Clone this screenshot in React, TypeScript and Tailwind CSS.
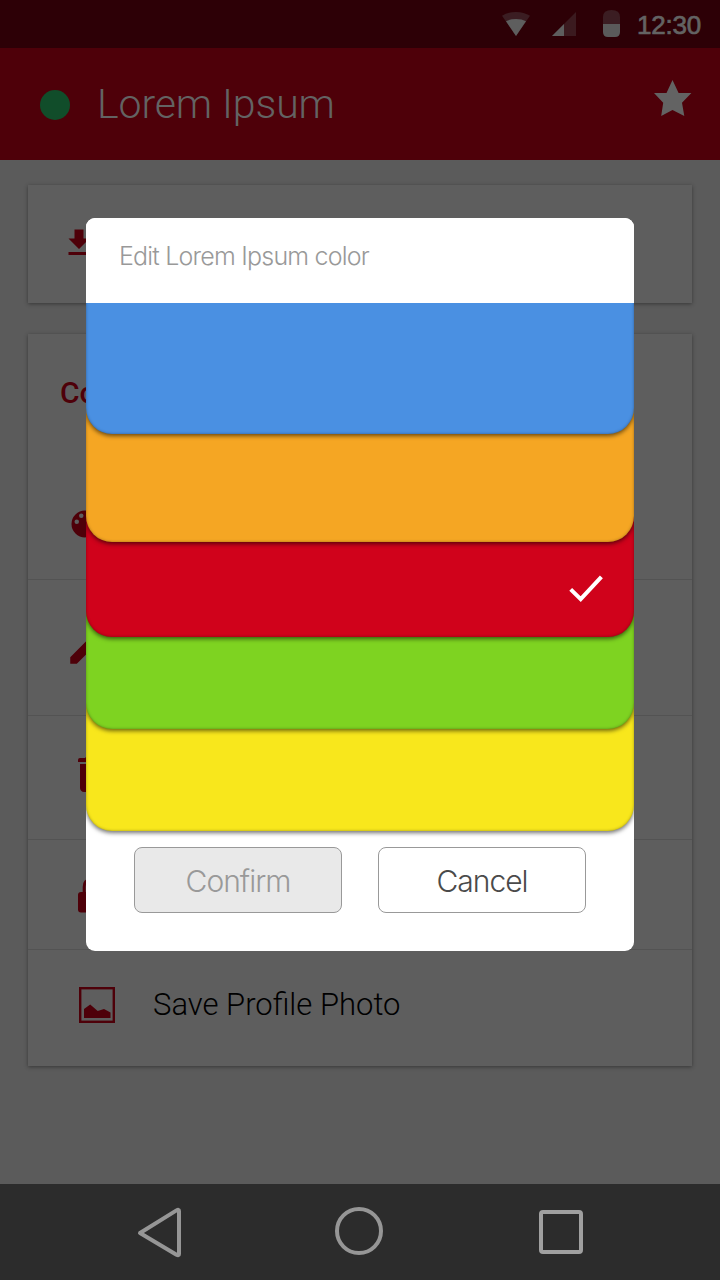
import React from "react";

const ICON = "#4e0009";

function StatusBar() {
  return (
    <div className="flex h-12 items-start bg-[#2d0006]">
      <svg className="ml-[500px] h-12 w-[128px] shrink-0" viewBox="500 0 128 48">
        <path d="M516 36 502 15.8Q508 12 516 12T530 15.8Z" fill="#3b1d22" />
        <path d="M516 36 506 21.3Q510 19 516 19T526 21.3Z" fill="#5e5e5e" />
        <path d="M552 36 576 12V36Z" fill="#3b1a1f" />
        <path d="M552 36 564 24V36Z" fill="#5e5e5e" />
        <path d="M603 24V17Q603 10 611.5 10T620 17V24Z" fill="#3b1d22" />
        <path d="M603 24H620V32Q620 37 615 37H608Q603 37 603 32Z" fill="#5a5a5a" />
      </svg>
      <span className="ml-[9px] mt-[7px] whitespace-nowrap font-['Liberation_Sans',sans-serif] text-[26px] leading-9 tracking-[-0.2px] text-[#636363] [-webkit-text-stroke:0.7px_#636363]">
        12:30
      </span>
    </div>
  );
}

function AppBar() {
  return (
    <header className="flex h-28 items-center bg-[#4e0009] pl-10 pr-[27px]">
      <span className="mt-[2px] size-[30px] rounded-full bg-[#114d2a]" />
      <h1 className="ml-[27px] font-[Roboto,sans-serif] text-[41px] font-light leading-none tracking-[-0.1px] text-[#636363]">
        Lorem Ipsum
      </h1>
      <svg className="-mt-3 ml-auto h-[38px] w-10" viewBox="653 79 40 38">
        <path
          d="M672.5 80 678.6 93.1H691.4L682 102.7 684.3 116 672.5 109.9 661.2 116 663.2 102.7 654 93.1H666.5Z"
          fill="#636363"
        />
      </svg>
    </header>
  );
}

function ActionCards() {
  const card = "bg-[#5e5e5e] shadow-[0_1px_4px_rgba(0,0,0,0.4)]";
  return (
    <main className="flex-1 px-7 pt-[25px]">
      <section className={`h-[118px] pl-[32.5px] pt-[39.5px] ${card}`}>
        <svg className="size-9" viewBox="0 0 24 24" fill={ICON}>
          <path d="M19 9h-4V3H9v6H5l7 7 7-7zM5 18v2h14v-2H5z" />
        </svg>
      </section>
      <section className={`mt-[31px] h-[732px] ${card}`}>
        <div className="h-[246px] border-b border-[#535353] pt-[42px]">
          <h2 className="pl-[32px] font-[Roboto,sans-serif] text-[30px] font-medium leading-[34px] text-[#4e0009]">
            Co
          </h2>
          <svg className="ml-[39px] mt-24 size-9" viewBox="0 0 24 24" fill={ICON}>
            <path d="M12 3a9 9 0 0 0 0 18c.83 0 1.5-.67 1.5-1.5 0-.39-.15-.74-.39-1.01-.23-.26-.38-.61-.38-.99 0-.83.67-1.5 1.5-1.5H16c2.76 0 5-2.24 5-5 0-4.42-4.03-8-9-8zm-5.5 9a1.5 1.5 0 1 1 0-3 1.5 1.5 0 0 1 0 3zm3-4a1.5 1.5 0 1 1 0-3 1.5 1.5 0 0 1 0 3z" />
          </svg>
        </div>
        <div className="h-[136px] border-b border-[#535353] pl-[36.75px] pt-[47px]">
          <svg className="size-[42px]" viewBox="0 0 24 24" fill={ICON}>
            <path d="M3 17.25V21h3.75L17.81 9.94l-3.75-3.75L3 17.25zM20.71 7.04a1 1 0 0 0 0-1.41l-2.34-2.34a1 1 0 0 0-1.41 0l-1.83 1.83 3.75 3.75 1.83-1.83z" />
          </svg>
        </div>
        <div className="h-[124px] border-b border-[#535353] pl-10 pt-[34px]">
          <svg className="size-12" viewBox="0 0 24 24" fill={ICON}>
            <path d="M6 19c0 1.1.9 2 2 2h8c1.1 0 2-.9 2-2V7H6v12zM19 4h-3.5l-1-1h-5l-1 1H6q-1 0-1 1v1h14z" />
          </svg>
        </div>
        <div className="h-[110px] border-b border-[#535353] pl-[50px] pt-[36px]">
          <svg className="h-[37px] w-6" viewBox="0 0 24 37">
            <rect y="16" width="24" height="20.6" rx="3" fill={ICON} />
            <path d="M6.2 17V11Q6.2 4 12 4T17.8 11V17" fill="none" stroke={ICON} strokeWidth="3" />
          </svg>
        </div>
        <div className="flex h-[116px] items-start pl-[51px] pt-[37px]">
          <svg className="size-9" viewBox="0 0 36 36">
            <rect x="1.2" y="1.2" width="33.6" height="33.6" fill="none" stroke={ICON} strokeWidth="2.4" />
            <path d="M5 22 11.2 17.5 18.7 24 25 22 31.5 25.5V31H5Z" fill={ICON} />
          </svg>
          <span className="ml-[38px] whitespace-nowrap font-[Roboto,sans-serif] text-[31px] font-light leading-9 text-black">
            Save Profile Photo
          </span>
        </div>
      </section>
    </main>
  );
}

function NavBar() {
  return (
    <nav className="flex h-24 items-start bg-[#2c2c2c] pt-[22px]">
      <svg className="ml-[136px] h-[52px] w-[48px]" viewBox="136 1206 48 52">
        <path d="M140 1233 176.5 1210.4Q179 1209 179 1211V1254Q179 1256 176.5 1254.8Z" fill="none" stroke="#969696" strokeWidth="4" strokeLinejoin="round" />
      </svg>
      <span className="ml-[151px] mt-px size-12 rounded-full border-4 border-[#969696]" />
      <span className="ml-[156px] mt-1 size-11 rounded-[4px] border-4 border-[#a0a0a0]" />
    </nav>
  );
}

const strip =
  "relative -mt-[26px] rounded-b-[26px] shadow-[0_2px_4px_rgba(0,0,0,0.55),inset_0_0_3px_rgba(0,0,0,0.35)]";

function ColorDialog() {
  const button =
    "flex h-[66px] w-[208px] items-center justify-center rounded-[8px] border border-[#999999] pt-[3px] font-[Inter,sans-serif] text-[30px] font-light";
  return (
    <div
      role="dialog"
      className="absolute left-[86px] top-[218px] flex h-[732.5px] w-[548px] flex-col overflow-hidden rounded-[9px] bg-white"
    >
      <div className="relative z-10 h-[85px] shrink-0 bg-white pl-[33px] pt-[21px] font-[Inter,sans-serif] text-[25px] font-light leading-[34px] tracking-[-0.8px] text-[#999999]">
        Edit Lorem Ipsum color
      </div>
      <div className={`z-[5] h-[156.5px] shrink-0 bg-[#4a90e2] ${strip}`} />
      <div className={`z-[4] h-[134.5px] shrink-0 bg-[#f5a623] ${strip}`} />
      <div className={`z-[3] flex h-[121px] shrink-0 justify-end bg-[#d0021b] pr-[30px] pt-[57px] ${strip}`}>
        <svg className="h-[30px] w-9" viewBox="568 573 36 30">
          <path d="M570.7 589.3 580.7 599.2 601.4 576.8" fill="none" stroke="white" strokeWidth="4" />
        </svg>
      </div>
      <div className={`z-[2] h-[118px] shrink-0 bg-[#7ed321] ${strip}`} />
      <div className={`z-[1] h-[128px] shrink-0 bg-[#f8e71c] ${strip}`} />
      <div className="mt-[16px] flex justify-center gap-9">
        <button className={`bg-[#e9e9e9] tracking-[-1px] text-[#999999] ${button}`}>Confirm</button>
        <button className={`bg-white tracking-[-1px] text-[#4a4a4a] ${button}`}>Cancel</button>
      </div>
    </div>
  );
}

export default function App() {
  return (
    <div className="relative flex h-[1280px] w-[720px] flex-col overflow-hidden bg-[#5b5b5b]">
      <StatusBar />
      <AppBar />
      <ActionCards />
      <NavBar />
      <ColorDialog />
    </div>
  );
}
